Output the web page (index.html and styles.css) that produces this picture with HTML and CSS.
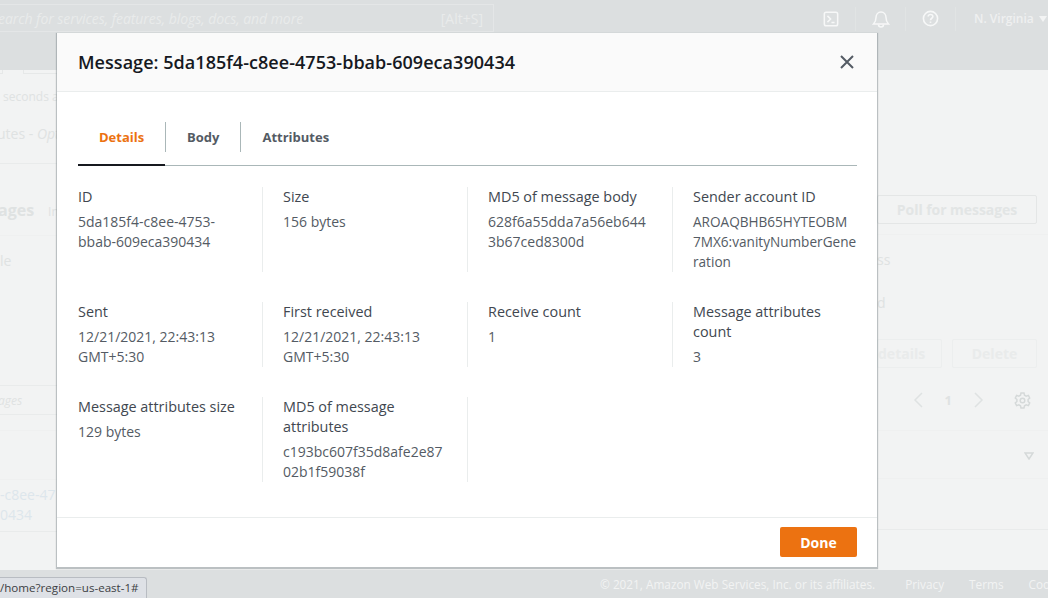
FILE: index.html
```html
<!DOCTYPE html>
<html lang="en">

<head>
    <meta charset="UTF-8">
    <title>Message details</title>
    <link rel="stylesheet" href="styles.css">
</head>

<body>
    <!-- dimmed page behind the dialog -->
    <header class="topbar">
        <div class="search">
            <span class="search_text">Search for services, features, blogs, docs, and more</span>
            <span class="search_key">[Alt+S]</span>
        </div>
        <div class="topbar_icons">
            <span class="topbar_icon">
                <svg width="16" height="16" viewBox="0 0 18 18" fill="none" stroke="#f7f8f8" stroke-width="1.7">
                    <rect x="1.5" y="1.5" width="15" height="15" rx="2"/>
                    <path d="M5 5.5 8.5 9 5 12.5M9.5 13H13"/>
                </svg>
            </span>
            <span class="topbar_icon">
                <svg width="18" height="18" viewBox="0 0 18 18" fill="none" stroke="#f7f8f8" stroke-width="1.5">
                    <path d="M1.5 14H16.5C14.5 12 14 10.500 14 7.500 14 4.500 12 2 9 2S4 4.500 4 7.500C4 10.500 3.500 12 1.500 14Z"/>
                    <path d="M6.500 14.500C6.500 16 7.500 17 9 17S11.500 16 11.500 14.500"/>
                </svg>
            </span>
            <span class="topbar_icon">
                <svg width="17" height="17" viewBox="0 0 18 18" fill="none" stroke="#f7f8f8" stroke-width="1.7">
                    <circle cx="9" cy="9" r="7.500"/>
                    <path d="M6.500 7C6.500 5.500 7.700 4.700 9 4.700S11.500 5.500 11.500 7C11.500 8.700 9 8.800 9 10.800"/>
                    <path d="M9 12.200V13.700"/>
                </svg>
            </span>
            <span class="region">N. Virginia <i class="region_caret"></i></span>
        </div>
    </header>
    <div class="subbar"></div>

    <main class="page">
        <div class="page_left">
            <div class="bg_tabs"><span></span><span></span></div>
            <p class="bg_seconds">seconds ago</p>
            <p class="bg_attr">utes - <em>Optional</em></p>
            <div class="bg_heading"><b>ages</b><span>In</span></div>
            <p class="bg_le">le</p>
            <p class="bg_filter"><em>ages</em></p>
            <div class="bg_rule"></div>
            <p class="bg_link">-c8ee-47<br>0434</p>
        </div>
        <div class="page_right">
            <div class="bg_poll_row">
                <button class="bg_btn bg_poll">Poll for messages</button>
            </div>
            <p class="bg_ss">ss</p>
            <p class="bg_d">d</p>
            <div class="bg_actions">
                <button class="bg_btn bg_details">details</button>
                <button class="bg_btn bg_delete">Delete</button>
            </div>
            <div class="bg_pager">
                <svg width="12" height="16" viewBox="0 0 12 16" fill="none" stroke="#dfe2e2" stroke-width="1.500"><path d="M10 1 3 8l7 7"/></svg>
                <span>1</span>
                <svg width="12" height="16" viewBox="0 0 12 16" fill="none" stroke="#dfe2e2" stroke-width="1.500"><path d="M2 1l7 7-7 7"/></svg>
                <svg class="bg_gear" width="17" height="17" viewBox="0 0 17 17" fill="none" stroke="#d5d9d9" stroke-width="1.500">
                    <circle cx="8.500" cy="8.500" r="2.300"/>
                    <path d="M7 1h3l.5 2.200 1.700.9 2.200-.7 1.300 2.600-1.600 1.500v2l1.600 1.500-1.300 2.600-2.200-.7-1.700.9L10 16H7l-.5-2.200-1.700-.9-2.200.7L1.300 11l1.600-1.500v-2L1.300 6l1.300-2.600 2.200.7 1.700-.9z"/>
                </svg>
            </div>
            <div class="bg_sort_row">
                <svg width="10" height="8" viewBox="0 0 10 8" fill="none" stroke="#d5d9d9" stroke-width="1.500"><path d="M1 1h8L5 7z"/></svg>
            </div>
            <div class="bg_end_rule"></div>
        </div>
    </main>

    <footer class="footer">
        <span class="footer_copy">© 2021, Amazon Web Services, Inc. or its affiliates.</span>
        <span>Privacy</span>
        <span>Terms</span>
        <span>Cookie preferences</span>
    </footer>

    <div class="status_tip">/home?region=us-east-1#</div>

    <!-- dialog -->
    <section class="modal">
        <div class="modal_head">
            <h2>Message: 5da185f4-c8ee-4753-bbab-609eca390434</h2>
            <svg width="16" height="16" viewBox="0 0 16 16" fill="none" stroke="#545b64" stroke-width="2"><path d="M2 2l12 12M14 2 2 14"/></svg>
        </div>
        <div class="modal_body">
            <ul class="tabs">
                <li class="tab tab_active">Details</li>
                <li class="tab">Body</li>
                <li class="tab">Attributes</li>
            </ul>
            <div class="details">
                <div class="field field_r1"><h4>ID</h4><p>5da185f4-c8ee-4753-<br>bbab-609eca390434</p></div>
                <div class="field field_r1"><h4>Size</h4><p>156 bytes</p></div>
                <div class="field field_r1"><h4>MD5 of message body</h4><p>628f6a55dda7a56eb644<br>3b67ced8300d</p></div>
                <div class="field field_r1"><h4>Sender account ID</h4><p class="value_tight">AROAQBHB65HYTEOBM<br>7MX6:vanityNumberGene<br>ration</p></div>
                <div class="field"><h4>Sent</h4><p>12/21/2021, 22:43:13<br>GMT+5:30</p></div>
                <div class="field"><h4>First received</h4><p>12/21/2021, 22:43:13<br>GMT+5:30</p></div>
                <div class="field"><h4>Receive count</h4><p>1</p></div>
                <div class="field"><h4>Message attributes<br>count</h4><p>3</p></div>
                <div class="field"><h4>Message attributes size</h4><p>129 bytes</p></div>
                <div class="field"><h4>MD5 of message<br>attributes</h4><p>c193bc607f35d8afe2e87<br>02b1f59038f</p></div>
            </div>
        </div>
        <div class="modal_foot">
            <button class="btn_done">Done</button>
        </div>
    </section>
</body>

</html>
```

FILE: styles.css
```css
* {
    margin: 0;
    padding: 0;
    box-sizing: border-box;
    list-style: none;
}

html,
body {
    height: 100%;
    overflow: hidden;
}

body {
    position: relative;
    width: 1048px;
    height: 598px;
    display: flex;
    flex-direction: column;
    background-color: #f2f3f3;
    font-family: "Open Sans", "Liberation Sans", sans-serif;
    font-size: 14px;
    color: #e3e5e5;
}

/* top bar */
.topbar {
    height: 34px;
    display: flex;
    justify-content: space-between;
    background-color: #dcdfe0;
}

.search {
    width: 494px;
    height: 28px;
    margin-top: 4px;
    padding-right: 10px;
    display: flex;
    justify-content: space-between;
    align-items: center;
    border: 1px solid #e4e6e7;
    border-left: 0;
    overflow: hidden;
    color: #e9ebeb;
}

.search_text {
    margin-left: -9px;
    font-style: italic;
    letter-spacing: -.06px;
    white-space: nowrap;
}

.topbar_icons {
    display: flex;
    align-items: center;
    padding-top: 3px;
}

.topbar_icon {
    width: 50px;
    height: 24px;
    display: flex;
    justify-content: center;
    align-items: center;
    border-right: 1px solid #e1e4e4;
}

.region {
    width: 92px;
    padding-left: 18px;
    font-size: 12px;
    font-weight: 600;
    color: #eff0f0;
    white-space: nowrap;
}

.region_caret {
    display: inline-block;
    margin-left: 2px;
    border: 4px solid transparent;
    border-top: 6px solid #f3f4f4;
    border-bottom: 0;
    vertical-align: 1px;
}

.subbar {
    height: 36px;
    background-color: #dcdfe0;
}

/* dimmed page */
.page {
    flex: 1;
    display: flex;
    justify-content: space-between;
}

.page_left {
    width: 57px;
    overflow: hidden;
    white-space: nowrap;
    color: #dfe2e2;
}

.page_right {
    width: 171px;
    color: #dfe2e2;
}

.bg_tabs {
    height: 4px;
    display: flex;
    gap: 20px;
}

.bg_tabs span {
    height: 4px;
    border: 1px solid #e6e8e8;
    border-top: 0;
}

.bg_tabs span:first-child {
    width: 3px;
    border-left: 0;
}

.bg_tabs span:last-child {
    width: 34px;
    border-right: 0;
}

.bg_seconds {
    margin-top: 14px;
    margin-left: 3px;
    font-size: 12px;
}

.bg_attr {
    margin-top: 19px;
    margin-left: -3px;
    padding-bottom: 20px;
    border-bottom: 1px solid #e9ebeb;
}

.bg_heading {
    margin-top: 35px;
    margin-left: -2px;
    padding-bottom: 14px;
    border-bottom: 1px solid #eff0f0;
    display: flex;
    gap: 14px;
    align-items: baseline;
}

.bg_heading b {
    font-size: 16px;
}

.bg_heading span {
    font-size: 12px;
}

.bg_le {
    margin-top: 15px;
}

.bg_filter {
    height: 30px;
    margin-top: 115px;
    margin-left: -2px;
    padding-top: 6px;
    border-top: 1px solid #e9ebeb;
    border-bottom: 1px solid #e9ebeb;
    font-size: 12px;
}

.bg_rule {
    margin-top: 15px;
    border-bottom: 1px solid #eff0f0;
}

.bg_link {
    margin-top: 48px;
    padding-top: 5px;
    padding-bottom: 6px;
    border-top: 1px solid #eff0f0;
    border-bottom: 1px solid #e9ebeb;
    line-height: 20px;
    color: #dde6ec;
}

.bg_btn {
    display: block;
    height: 29px;
    border: 1px solid #e4e6e6;
    border-radius: 2px;
    background: transparent;
    font-family: inherit;
    font-size: 14px;
    font-weight: 700;
    color: #e2e5e5;
}

.bg_poll_row {
    height: 165px;
    padding-top: 125px;
    border-bottom: 1px solid #eff0f0;
}

.bg_poll {
    width: 160px;
    letter-spacing: -.05px;
}

.bg_ss {
    margin-top: 15px;
}

.bg_d {
    margin-top: 24px;
}

.bg_actions {
    display: flex;
    justify-content: flex-end;
    gap: 10px;
    width: 160px;
    margin-top: 27px;
}

.bg_actions .bg_btn {
    color: #e9ebeb;
    border-color: #eceeee;
}

.bg_details {
    width: 65px;
    padding-right: 20px;
    text-align: right;
}

.bg_delete {
    width: 85px;
}

.bg_pager {
    height: 62px;
    padding-top: 21px;
    padding-bottom: 19px;
    display: flex;
    align-items: center;
    justify-content: flex-end;
    gap: 21px;
    width: 154px;
    font-weight: 700;
    font-size: 13px;
}

.bg_gear {
    margin-left: 8px;
}

.bg_sort_row {
    height: 49px;
    padding-top: 21px;
    padding-left: 147px;
    border-top: 1px solid #eff0f0;
    border-bottom: 1px solid #eff0f0;
}

.bg_sort_row svg {
    display: block;
}

.bg_end_rule {
    height: 51px;
    border-bottom: 1px solid #e9ebeb;
}

/* footer */
.footer {
    height: 28px;
    display: flex;
    align-items: center;
    gap: 25px;
    padding-left: 600px;
    background-color: #dcdfe0;
    font-size: 11.800px;
    color: #f2f3f3;
    white-space: nowrap;
    overflow: hidden;
}

.footer_copy {
    margin-right: 5px;
}

.status_tip {
    position: absolute;
    left: 0;
    bottom: 0;
    width: 147px;
    height: 21px;
    background-color: #dee1e6;
    border: 1px solid #b8bcc2;
    border-left: 0;
    border-bottom: 0;
    border-top-right-radius: 3px;
    font-size: 11.600px;
    line-height: 19px;
    color: #3c4043;
    white-space: nowrap;
}

/* modal */
.modal {
    position: absolute;
    left: 57px;
    top: 33px;
    width: 820px;
    height: 534px;
    display: flex;
    flex-direction: column;
    background-color: #fff;
    box-shadow: 0 1px 1px 1px rgba(120, 130, 135, .45);
    color: #16191f;
}

.modal_head {
    height: 59px;
    padding: 0 22px 0 21px;
    display: flex;
    justify-content: space-between;
    align-items: center;
    background-color: #fafafa;
    border-bottom: 1px solid #eaeded;
}

.modal_head h2 {
    font-size: 18px;
    font-weight: 600;
    letter-spacing: .04px;
    color: #16191f;
}

.modal_body {
    flex: 1;
    padding: 19px 20px 0 21px;
}

.tabs {
    display: flex;
    height: 55px;
    border-bottom: 1px solid #aab7b8;
}

.tab {
    position: relative;
    height: 55px;
    padding: 17px 21px 0 22px;
    font-weight: 700;
    font-size: 13px;
    color: #545b64;
}

.tab + .tab::before {
    content: "";
    position: absolute;
    left: 0;
    top: 11px;
    height: 30px;
    border-left: 1px solid #aab7b8;
}

.tab_active {
    width: 87px;
    padding-left: 21px;
    color: #ec7211;
    border-bottom: 2px solid #16191f;
}

.details {
    display: grid;
    grid-template-columns: repeat(4, 205px);
    margin-top: 21px;
}

.field {
    min-height: 65px;
    margin-bottom: 30px;
    margin-right: 20px;
    border-right: 1px solid #eaeded;
    line-height: 20px;
}

.field_r1 {
    height: 85px;
}

.field:nth-child(4n) {
    border-right: 0;
    margin-right: 0;
}

.field:nth-child(n+9) {
    margin-bottom: 0;
    height: 85px;
}

.field h4 {
    margin-bottom: 5px;
    font-size: 14.400px;
    font-weight: 400;
    color: #414750;
    white-space: nowrap;
}

.field p {
    font-size: 14px;
    color: #545b64;
    white-space: nowrap;
}

.field .value_tight {
    font-size: 13.600px;
}

.modal_foot {
    height: 50px;
    padding: 9px 20px 0 0;
    display: flex;
    justify-content: flex-end;
    align-items: flex-start;
    border-top: 1px solid #eaeded;
}

.btn_done {
    width: 77px;
    height: 30px;
    border: 0;
    border-radius: 2px;
    background-color: #ec7211;
    font-family: inherit;
    font-size: 14px;
    font-weight: 700;
    color: #fff;
}
```
